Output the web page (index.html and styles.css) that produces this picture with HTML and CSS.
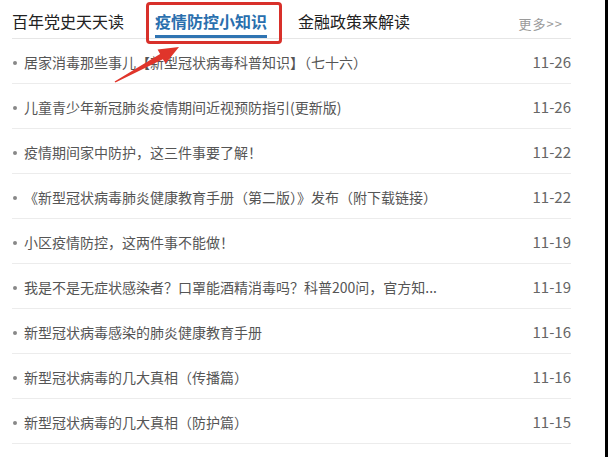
FILE: index.html
```html
<!DOCTYPE html>
<html lang="zh-CN">

<head>
    <meta charset="UTF-8">
    <meta name="viewport" content="width=device-width, initial-scale=1.0">
    <title>疫情防控小知识</title>
    <link rel="stylesheet" href="styles.css">
</head>

<body>
    <div class="frame">
        <div class="panel">
            <div class="tabs">
                <span class="tab">百年党史天天读</span>
                <span class="tab tab-active">疫情防控小知识</span>
                <span class="tab">金融政策来解读</span>
                <a class="more" href="#">更多&gt;&gt;</a>
            </div>

            <ul class="news">
                <li><span class="title">居家消毒那些事儿【新型冠状病毒科普知识】（七十六）</span><span class="date">11-26</span></li>
                <li><span class="title">儿童青少年新冠肺炎疫情期间近视预防指引(更新版)</span><span class="date">11-26</span></li>
                <li><span class="title">疫情期间家中防护，这三件事要了解！</span><span class="date">11-22</span></li>
                <li><span class="title">《新型冠状病毒肺炎健康教育手册（第二版）》发布（附下载链接）</span><span class="date">11-22</span></li>
                <li><span class="title">小区疫情防控，这两件事不能做！</span><span class="date">11-19</span></li>
                <li><span class="title">我是不是无症状感染者？口罩能酒精消毒吗？科普200问，官方知...</span><span class="date">11-19</span></li>
                <li><span class="title">新型冠状病毒感染的肺炎健康教育手册</span><span class="date">11-16</span></li>
                <li><span class="title">新型冠状病毒的几大真相（传播篇）</span><span class="date">11-16</span></li>
                <li><span class="title">新型冠状病毒的几大真相（防护篇）</span><span class="date">11-15</span></li>
            </ul>

            <!-- red annotation arrow pointing at the active tab -->
            <svg class="arrow" width="200" height="100" viewBox="0 0 200 100">
                <polygon points="179,47 165.6,63.6 162.9,59.2 115.4,82.5 114.6,81.5 160.1,54.0 157.6,49.6" fill="#e0352b"/>
            </svg>
        </div>
        <div class="edge"></div>
    </div>
</body>

</html>
```

FILE: styles.css
```css
body {
    margin: 0;
    padding: 0;
    background: #fff;
    font-family: "Noto Sans CJK SC", "Noto Sans", sans-serif;
}

.frame {
    display: flex;
    height: 457px;
    overflow: hidden;
}

.panel {
    position: relative;
    flex: 1;
    padding: 0 34px 0 12px;
    background: #fff;
}

.edge {
    width: 3px;
    background: #000;
}

.tabs {
    display: flex;
    align-items: flex-start;
    height: 38px;
    border-bottom: 1px solid #e6e6e6;
}

.tab {
    position: relative;
    margin-right: 31px;
    padding-top: 8px;
    font-size: 16px;
    line-height: 27px;
    color: #222;
    border-bottom: 3px solid transparent;
}

.tab-active {
    color: #2a6fae;
    font-weight: bold;
    border-bottom-color: #2f74b2;
}

.tab-active::after {
    content: "";
    position: absolute;
    left: -9px;
    right: -15px;
    top: 2px;
    height: 42px;
    border: 3px solid #d8302a;
    border-radius: 4px;
    box-sizing: border-box;
}

.more {
    margin-left: auto;
    margin-right: 8px;
    padding-top: 12px;
    font-size: 13px;
    line-height: 24px;
    color: #9a9a9a;
    text-decoration: none;
    letter-spacing: 1px;
}

.news {
    list-style: none;
    margin: 0;
    padding: 0;
}

.news li {
    display: flex;
    align-items: center;
    box-sizing: border-box;
    height: 45px;
    padding-top: 1px;
    border-bottom: 1px solid #ececec;
}

.title {
    position: relative;
    flex: 1;
    padding-left: 12px;
    font-size: 14px;
    color: #555;
    white-space: nowrap;
    overflow: hidden;
}

.title::before {
    content: "";
    position: absolute;
    left: 1px;
    top: 50%;
    width: 4px;
    height: 4px;
    margin-top: -1px;
    border-radius: 50%;
    background: #888;
}

.date {
    font-size: 15px;
    color: #666;
}

.arrow {
    position: absolute;
    left: 0;
    top: 0;
    pointer-events: none;
}
```
